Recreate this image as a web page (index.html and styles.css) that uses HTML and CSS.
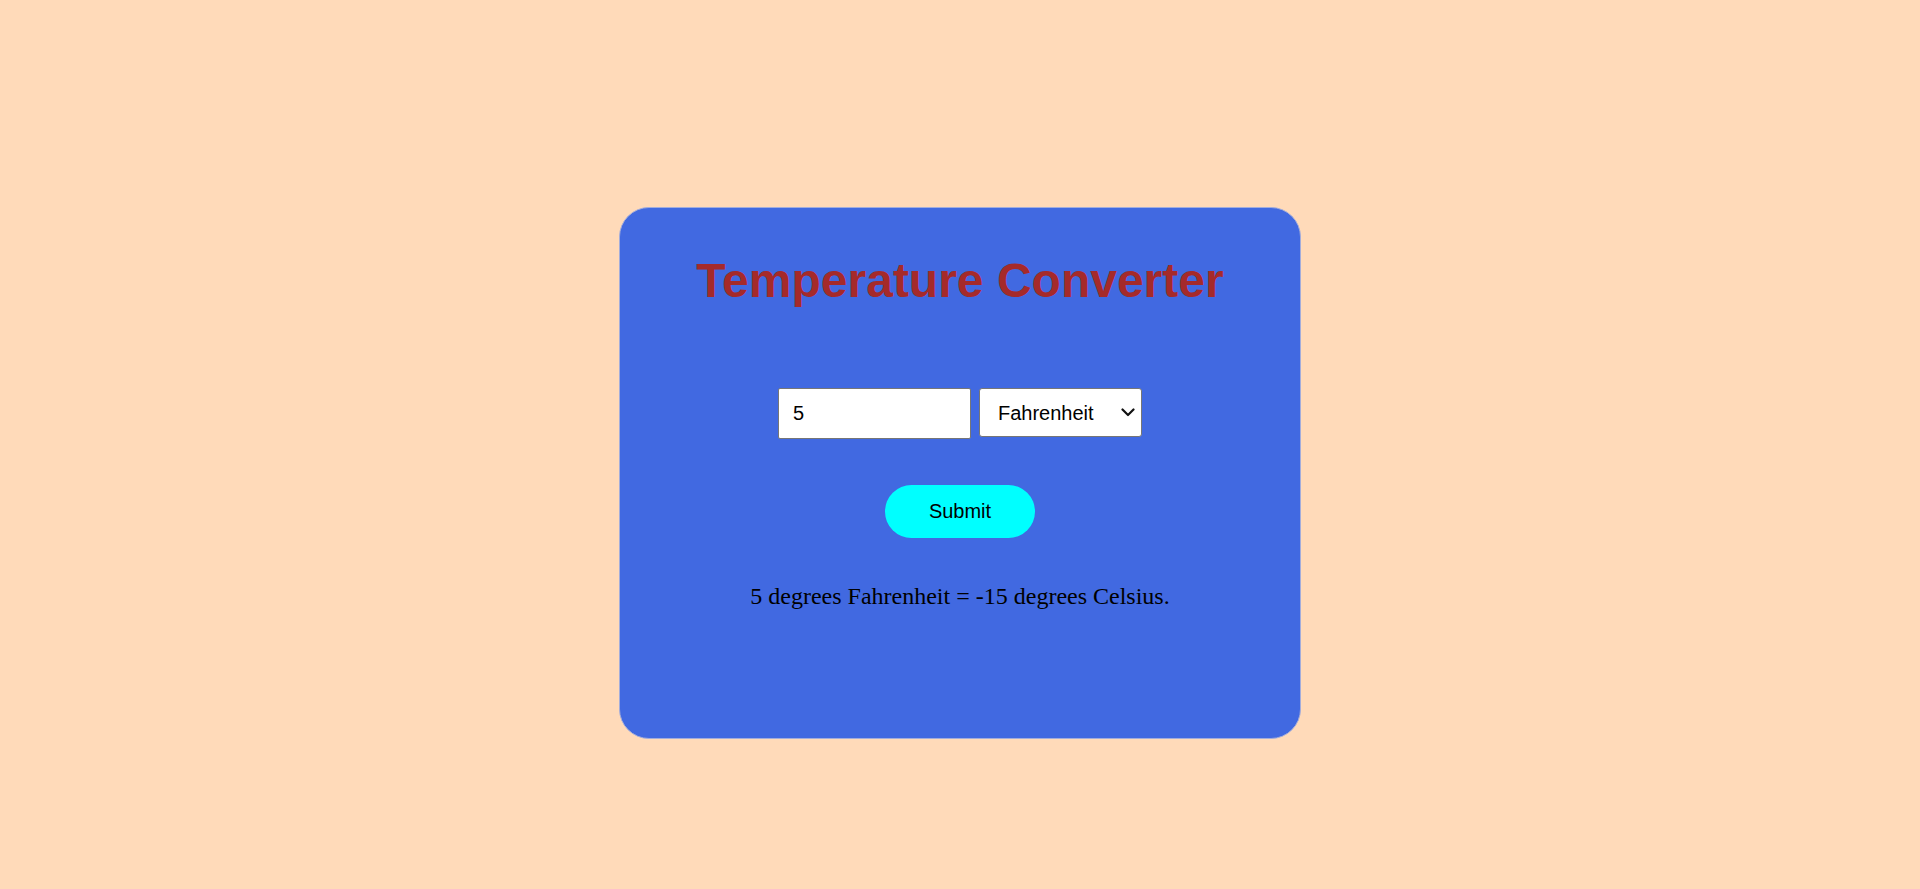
FILE: index.html
```html
<!DOCTYPE html>
<html lang="en">
<head>
<meta charset="utf-8">
<title>Temperature Converter</title>
<link rel="stylesheet" href="styles.css">
</head>
<body>
  <main class="card">
    <h1 class="title">Temperature Converter</h1>
    <form class="form">
      <div class="row">
        <input class="num" type="text" value="5">
        <div class="select-wrap">
          <select class="unit">
            <option selected>Fahrenheit</option>
            <option>Celsius</option>
          </select>
          <svg class="chev" width="14" height="9" viewBox="0 0 14 9" aria-hidden="true">
            <path d="M1.5 1.5 L7 7 L12.5 1.5" fill="none" stroke="#111" stroke-width="2.2" stroke-linecap="round" stroke-linejoin="round"/>
          </svg>
        </div>
      </div>
      <button class="submit" type="button">Submit</button>
    </form>
    <p class="result">5 degrees Fahrenheit = -15 degrees Celsius.</p>
  </main>
</body>
</html>
```

FILE: styles.css
```css
html, body {
  margin: 0;
  padding: 0;
}
body {
  background: #FFDAB9;
  font-family: "Liberation Serif", "Times New Roman", serif;
}
.card {
  box-sizing: border-box;
  width: 682px;
  height: 532px;
  margin: 207px auto 0;
  background: #4169E1;
  border: 1px solid #a3addb;
  border-radius: 30px;
  padding: 45px 20px 0;
  display: flex;
  flex-direction: column;
  align-items: center;
}
.title {
  margin: 0;
  font-family: "Liberation Sans", Arial, sans-serif;
  font-weight: bold;
  font-size: 48px;
  line-height: 55px;
  color: #A52A2A;
  text-align: center;
}
.form {
  margin-top: 80px;
  display: flex;
  flex-direction: column;
  align-items: center;
}
.row {
  display: flex;
  align-items: flex-start;
  gap: 8px;
}
.num {
  box-sizing: border-box;
  width: 193px;
  height: 51px;
  padding: 0 14px;
  border: 1px solid #767676;
  border-radius: 2px;
  background: #fff;
  font-family: "Liberation Sans", Arial, sans-serif;
  font-size: 20px;
  color: #000;
}
.select-wrap {
  position: relative;
  width: 163px;
  height: 49px;
}
.unit {
  box-sizing: border-box;
  width: 163px;
  height: 49px;
  padding: 0 30px 0 18px;
  border: 1px solid #767676;
  border-radius: 3px;
  background: #fff;
  font-family: "Liberation Sans", Arial, sans-serif;
  font-size: 20px;
  color: #000;
  -webkit-appearance: none;
  appearance: none;
}
.chev {
  position: absolute;
  right: 7px;
  top: 20px;
  pointer-events: none;
}
.submit {
  margin-top: 46px;
  width: 150px;
  height: 53px;
  border: none;
  border-radius: 27px;
  background: #00FFFF;
  color: #000;
  font-family: "Liberation Sans", Arial, sans-serif;
  font-size: 20px;
  padding: 0;
}
.result {
  margin: 44px 0 0;
  font-size: 24px;
  line-height: 28px;
  color: #000;
  text-align: center;
}
```
